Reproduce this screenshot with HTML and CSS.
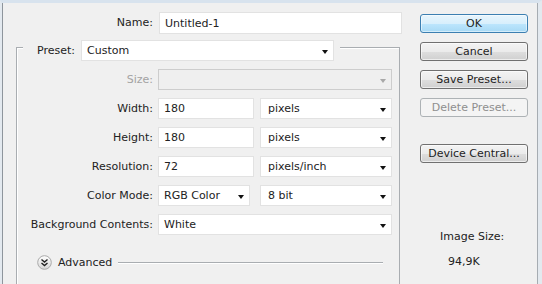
FILE: index.html
```html
<!DOCTYPE html>
<html lang="en">
<head>
  <meta charset="UTF-8">
  <title>New</title>
  <link rel="stylesheet" href="styles.css">
</head>
<body>
  <div class="window">
    <div class="panel">

      <div class="form">
        <div class="name-row">
          <span class="label name-label">Name:</span>
          <div class="field name-field">Untitled-1</div>
        </div>

        <div class="group">
          <div class="legend">
            <span class="label">Preset:</span>
            <div class="select preset-select">Custom<span class="arrow"></span></div>
          </div>

          <div class="row">
            <span class="label disabled">Size:</span>
            <div class="select full disabled-select"><span class="arrow"></span></div>
          </div>
          <div class="row">
            <span class="label">Width:</span>
            <div class="field small">180</div>
            <div class="select unit">pixels<span class="arrow"></span></div>
          </div>
          <div class="row">
            <span class="label">Height:</span>
            <div class="field small">180</div>
            <div class="select unit">pixels<span class="arrow"></span></div>
          </div>
          <div class="row">
            <span class="label">Resolution:</span>
            <div class="field small">72</div>
            <div class="select unit">pixels/inch<span class="arrow"></span></div>
          </div>
          <div class="row">
            <span class="label">Color Mode:</span>
            <div class="select mode">RGB Color<span class="arrow"></span></div>
            <div class="select unit">8 bit<span class="arrow"></span></div>
          </div>
          <div class="row">
            <span class="label">Background Contents:</span>
            <div class="select full">White<span class="arrow"></span></div>
          </div>

          <div class="advanced">
            <svg class="adv-icon" width="15" height="15" viewBox="0 0 15 15">
              <defs>
                <linearGradient id="advGrad" x1="0" y1="0" x2="0" y2="1">
                  <stop offset="0" stop-color="#ffffff"/>
                  <stop offset="1" stop-color="#d6d6d6"/>
                </linearGradient>
              </defs>
              <circle cx="7.5" cy="7.5" r="6.8" fill="url(#advGrad)" stroke="#a9a9a9"/>
              <polyline points="4.5,4.5 7.5,7 10.5,4.5" fill="none" stroke="#222" stroke-width="1.4"/>
              <polyline points="4.5,8 7.5,10.5 10.5,8" fill="none" stroke="#222" stroke-width="1.4"/>
            </svg>
            <span class="adv-text">Advanced</span>
            <span class="adv-line"></span>
          </div>
        </div>
      </div>

      <div class="side">
        <button class="btn default">OK</button>
        <button class="btn">Cancel</button>
        <button class="btn">Save Preset...</button>
        <button class="btn" disabled>Delete Preset...</button>
        <button class="btn device">Device Central...</button>
        <div class="size-title">Image Size:</div>
        <div class="size-value">94,9K</div>
      </div>

    </div>
  </div>
</body>
</html>
```

FILE: styles.css
```css
body {
  margin: 0;
  background-color: #f0f0f0;
  font-family: "DejaVu Sans", Verdana, sans-serif;
  font-size: 11px;
  color: #222;
}
.window {
  display: flex;
  height: 284px;
  box-sizing: border-box;
  border-top: 3px solid #d8e3ee;
  border-left: 2px solid #e3e9ef;
  border-right: 4px solid #e3e9ef;
  overflow: hidden;
}
.panel {
  flex: 1;
  display: flex;
  background-color: #f0f0f0;
  border-left: 1px solid #8e959c;
  border-right: 1px solid #a6acb2;
}
.form {
  width: 407px;
  padding-top: 9px;
}
.label {
  line-height: 14px;
  white-space: nowrap;
}
.label.disabled {
  color: #a3a3a3;
}
.name-row {
  display: flex;
  align-items: center;
}
.name-label {
  width: 150px;
  text-align: right;
  margin-right: 6px;
}
.field, .select {
  box-sizing: border-box;
  height: 21px;
  background-color: #fff;
  border: 1px solid #e2e2e2;
  display: flex;
  align-items: center;
  padding-left: 5px;
  white-space: nowrap;
}
.name-field {
  width: 243px;
  height: 22px;
}
.select {
  padding-right: 5px;
}
.arrow {
  margin-left: auto;
  margin-top: 2px;
  width: 0;
  height: 0;
  border-left: 3.5px solid transparent;
  border-right: 3.5px solid transparent;
  border-top: 4px solid #111;
}
.disabled-select {
  background-color: #efefef;
  border-color: #cdcdcd;
}
.disabled-select .arrow {
  border-top-color: #a8a8a8;
}

/* group box */
.group {
  margin: 13px 0 0 13px;
  width: 384px;
  height: 260px;
  box-sizing: border-box;
  border: 1px solid #a9adb1;
  border-bottom: none;
  box-shadow: inset 1px 1px 0 #fff;
}
.legend {
  display: flex;
  align-items: center;
  margin: -8px 0 0 6px;
  width: fit-content;
  background-color: #f0f0f0;
  padding: 0 6px 0 14px;
}
.legend .label {
  margin-right: 6px;
}
.preset-select {
  width: 253px;
}
.row {
  display: flex;
  align-items: center;
  margin-top: 8px;
}
.row .label {
  width: 136px;
  text-align: right;
  margin-right: 5px;
}
.full {
  width: 234px;
}
.small {
  width: 96px;
  margin-right: 6px;
}
.mode {
  width: 92px;
  margin-right: 10px;
}
.unit {
  width: 132px;
  padding-left: 7px;
}

/* advanced */
.advanced {
  display: flex;
  align-items: center;
  margin: 20px 16px 0 20px;
  height: 15px;
}
.adv-text {
  margin-left: 6px;
}
.adv-line {
  flex: 1;
  margin-left: 6px;
  border-top: 1px solid #a9adb1;
  border-bottom: 1px solid #fff;
}

/* buttons */
.side {
  flex: 1;
  display: flex;
  flex-direction: column;
  padding: 11px 0 0 10px;
}
.btn {
  width: 108px;
  height: 19px;
  margin: 0 0 9px 0;
  padding: 0;
  font-family: inherit;
  font-size: 11px;
  color: #1e1e1e;
  border: 1px solid #707070;
  border-radius: 3px;
  background: linear-gradient(#f3f3f3 0%, #ebebeb 50%, #dedede 51%, #d0d0d0 100%);
  box-shadow: inset 0 0 0 1px rgba(255, 255, 255, 0.6);
}
.btn.default {
  border-color: #3c7fb1;
  background: linear-gradient(#e8f5fc 0%, #d8effc 50%, #bde6fd 51%, #a7d9f5 100%);
  box-shadow: inset 0 0 0 1px rgba(255, 255, 255, 0.5);
}
.btn:disabled {
  color: #8f8f8f;
  border-color: #adb2b5;
  background: #f4f4f4;
  box-shadow: none;
}
.btn.device {
  margin-top: 18px;
}
.size-title {
  margin: 58px 0 0 20px;
  line-height: 14px;
}
.size-value {
  margin: 11px 0 0 28px;
  line-height: 14px;
}
```
